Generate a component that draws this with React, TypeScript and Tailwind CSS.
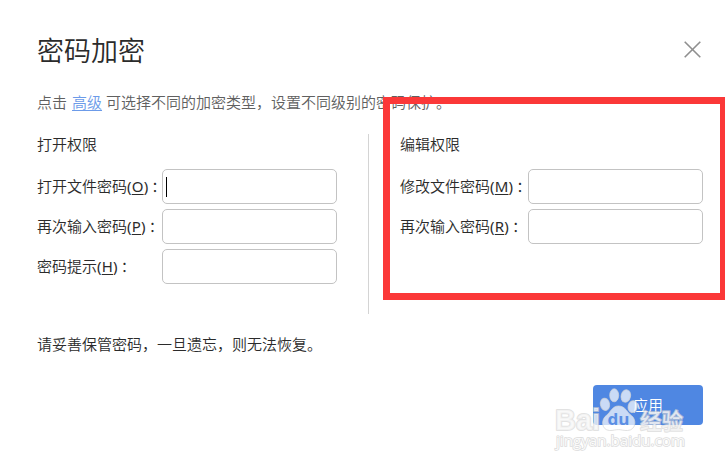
import type { ReactNode } from "react";

interface FieldProps {
  label: string;
  accessKey: string;
  labelWidth: string;
  focused?: boolean;
}

function Field({ label, accessKey, labelWidth, focused }: FieldProps) {
  return (
    <div className="flex h-[35px] items-center">
      <label className={`${labelWidth} shrink-0 whitespace-nowrap pb-0.5`}>
        {label}
        <span className="font-['Noto_Sans',sans-serif] font-normal tracking-[0.2px]">
          (<span className="underline decoration-1 underline-offset-2">{accessKey}</span>)
        </span>
        <span className="ml-[3px]">：</span>
      </label>
      <div className="flex h-[35px] w-[175px] items-center rounded-[5px] border border-[#c3c3c3] bg-white pl-[3px]">
        {focused && <span className="mt-px h-5 w-px bg-black" />}
      </div>
    </div>
  );
}

function Section({ title, className, children }: { title: string; className: string; children: ReactNode }) {
  return (
    <section className={className}>
      <h2 className="mb-[15px] h-5 leading-5">{title}</h2>
      <div className="flex flex-col gap-[5px]">{children}</div>
    </section>
  );
}

function Watermark() {
  return (
    <svg className="absolute left-[545px] top-[380px]" width="180" height="80" viewBox="0 0 180 80">
      <g fontFamily="'Liberation Sans', 'Noto Sans CJK SC', sans-serif" fontWeight="700" paintOrder="stroke" strokeLinejoin="round" fill="#f8f8f8" fillOpacity="0.75" stroke="#d2d2d2" strokeOpacity="0.65" strokeWidth="2">
        <text x="10" y="49.5" fontSize="30" textLength="45" lengthAdjust="spacingAndGlyphs">Bai</text>
        <text x="95" y="49" fontSize="22" textLength="43" lengthAdjust="spacingAndGlyphs" fontWeight="500">经验</text>
      </g>
      <g fill="#ffffff" fillOpacity="0.7" stroke="#d4d4d4" strokeOpacity="0.7" strokeWidth="1">
        <ellipse cx="60" cy="24.3" rx="4.6" ry="6.2" transform="rotate(-10 60 24.3)" />
        <ellipse cx="69.2" cy="15.3" rx="4.5" ry="6.5" />
        <ellipse cx="80.8" cy="16" rx="4.7" ry="6.3" transform="rotate(14 80.8 16)" />
        <ellipse cx="87.7" cy="26.6" rx="4.6" ry="6" transform="rotate(12 87.7 26.6)" />
        <path d="M73.5 26C80.5 26 82 32.5 86.3 35.4C92 39.3 91 50.3 82.5 50.5C78.5 50.7 76.5 49.6 73.5 49.6C70 49.6 68.5 50.7 64.5 50.5C56.3 50 55.7 39.6 61.5 35.3C65.7 32.3 67 26 73.5 26Z" />
      </g>
      <text x="62.5" y="44.5" fontSize="16" textLength="22" lengthAdjust="spacingAndGlyphs" fontFamily="'Open Sans', sans-serif" fontWeight="700" fill="#5b8fe4">du</text>
      <text x="11" y="66" fontSize="14.5" textLength="129" lengthAdjust="spacingAndGlyphs" fontFamily="'Open Sans', sans-serif" fontWeight="500" fill="#fafafa" stroke="#dcdcdc" strokeWidth="1.5" paintOrder="stroke">jingyan.baidu.com</text>
    </svg>
  );
}

export default function App() {
  return (
    <main className="relative h-[466px] w-[725px] overflow-hidden bg-white font-['Open_Sans','Noto_Sans_CJK_SC',sans-serif] text-[15px] font-[350] leading-5 text-[#2b2b2b]">
      <header className="flex h-[92px] items-start justify-between pl-[37px] pr-[24px] pt-[32px]">
        <h1 className="mt-px text-[27px] leading-9">密码加密</h1>
        <button aria-label="关闭" className="mt-[9px]">
          <svg width="17" height="17" viewBox="0 0 17 17" fill="none" stroke="#8f8f8f" strokeWidth="1.6">
            <path d="M0.7 0.7L16.3 16.3M16.3 0.7L0.7 16.3" />
          </svg>
        </button>
      </header>

      <p className="flex h-5 whitespace-nowrap pl-[37px] text-[#606060]">
        点击
        <a href="#" className="ml-[5px] mr-[4px] text-[#6c9be9] underline underline-offset-2">高级</a>
        可选择不同的加密类型，设置不同级别的密码保护。
      </p>

      <div className="mt-[22px] flex h-[180px] pl-[37px]">
        <Section title="打开权限" className="w-[331px] shrink-0">
          <Field label="打开文件密码" accessKey="O" labelWidth="w-[125px]" focused />
          <Field label="再次输入密码" accessKey="P" labelWidth="w-[125px]" />
          <Field label="密码提示" accessKey="H" labelWidth="w-[125px]" />
        </Section>
        <div className="w-px shrink-0 bg-[#d4d4d4]" />
        <Section title="编辑权限" className="ml-[31px]">
          <Field label="修改文件密码" accessKey="M" labelWidth="w-[128px]" />
          <Field label="再次输入密码" accessKey="R" labelWidth="w-[128px]" />
        </Section>
      </div>

      <p className="mt-[20px] pl-[37px]">请妥善保管密码，一旦遗忘，则无法恢复。</p>

      <footer className="mt-[31px] flex justify-end pr-[22px]">
        <button className="h-10 w-[110px] rounded-[4px] bg-[#4f87e2] text-white">应用</button>
      </footer>

      <div className="pointer-events-none absolute left-[383px] top-[97px] h-[203px] w-[344px] border-[7px] border-[#fb3838]" />
      <Watermark />
    </main>
  );
}
